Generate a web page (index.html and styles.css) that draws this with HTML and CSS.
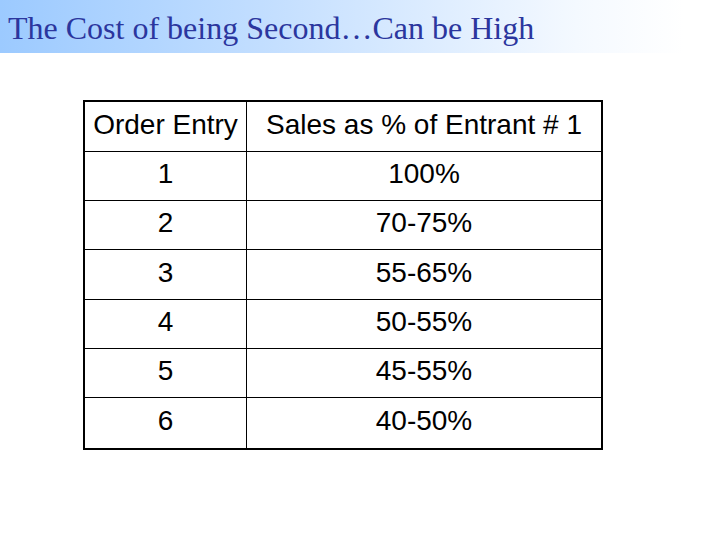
FILE: index.html
```html
<!DOCTYPE html>
<html>
<head>
<meta charset="utf-8">
<link rel="stylesheet" href="styles.css">
</head>
<body>
<div class="titlebar"><h1 class="title">The Cost of being Second…Can be High</h1></div>
<div class="content">
<table class="grid">
<tr class="tall"><td class="c1">Order Entry</td><td class="c2">Sales as % of Entrant # 1</td></tr>
<tr><td>1</td><td>100%</td></tr>
<tr><td>2</td><td>70-75%</td></tr>
<tr class="tall"><td>3</td><td>55-65%</td></tr>
<tr><td>4</td><td>50-55%</td></tr>
<tr><td>5</td><td>45-55%</td></tr>
<tr class="last"><td>6</td><td>40-50%</td></tr>
</table>
</div>
</body>
</html>
```
FILE: styles.css
```css
html, body { margin: 0; padding: 0; background: #fff; }
body { width: 720px; height: 540px; overflow: hidden; }
.titlebar {
  height: 53px;
  background: linear-gradient(to right, #9ccaff 0%, #c6e0ff 40%, #f4f9ff 80%, #ffffff 95%);
  display: flex;
  align-items: center;
}
.title {
  margin: 0 0 0 8px;
  font-family: "Liberation Serif", serif;
  font-weight: normal;
  font-size: 32px;
  color: #2b369e;
  line-height: 1;
  padding-top: 2px;
}
.content { padding: 47px 0 0 83px; }
.grid {
  border-collapse: collapse;
  border: 2px solid #000;
  font-family: "Liberation Sans", Arial, sans-serif;
  font-size: 28px;
  color: #000;
}
.grid td {
  border: 1px solid #000;
  height: 45px;
  padding: 0 0 3px 0;
  line-height: 1.1;
  text-align: center;
  vertical-align: middle;
}
.grid .tall td { height: 46px; }
.grid .last td { height: 47px; }
.grid .c1 { width: 161px; }
.grid .c2 { width: 354px; }
```
